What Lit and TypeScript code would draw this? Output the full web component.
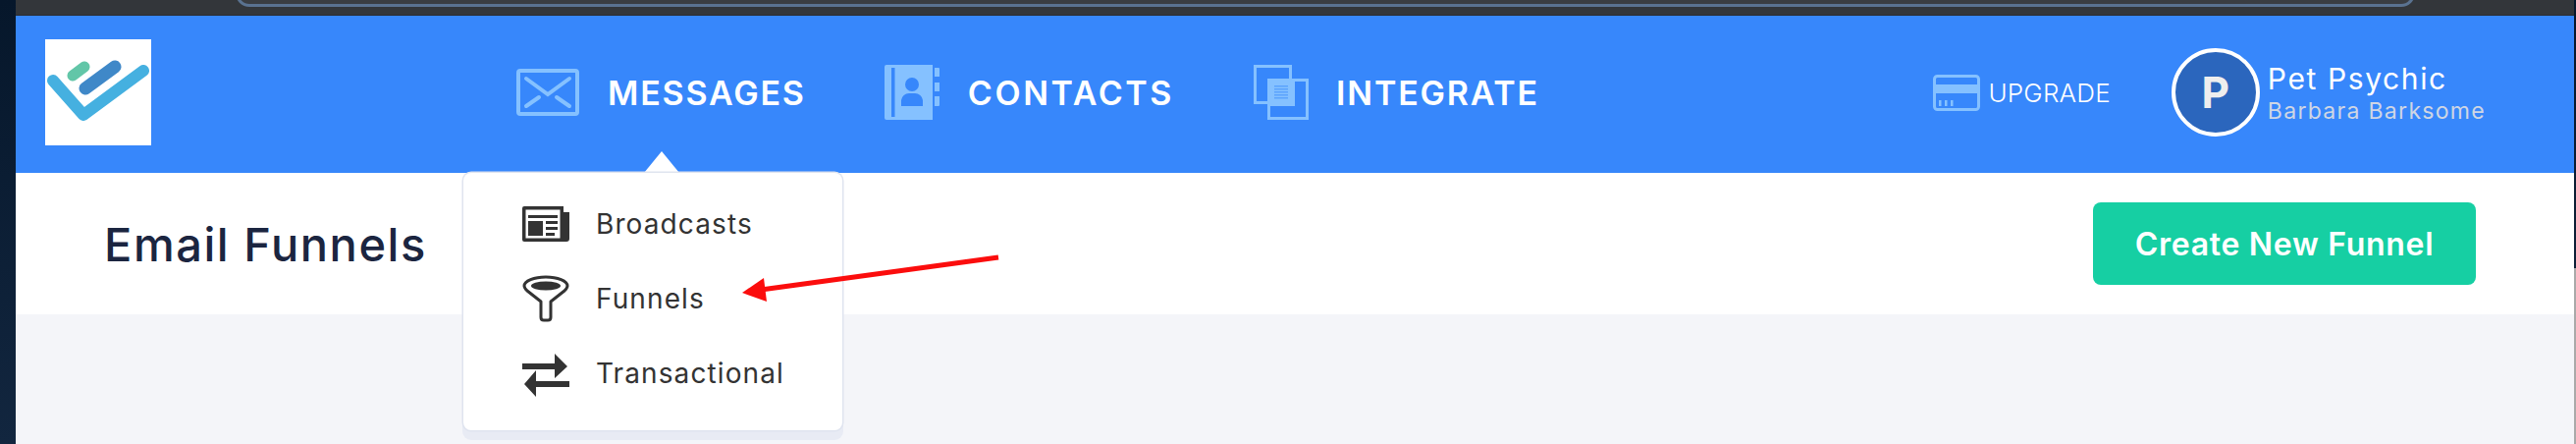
import { LitElement, html, css } from "lit";
import { customElement } from "lit/decorators.js";

const envelope = html`<svg class="ico env" viewBox="0 0 64 48" fill="none" stroke="#85c1ff" stroke-width="4" stroke-linecap="round"><rect x="2" y="2" width="60" height="44" rx="2"/><path d="M10 10 L32 26 L54 10"/><path d="M10 38 L23 29"/><path d="M54 38 L41 29"/></svg>`;
const book = html`<svg class="ico book" viewBox="0 0 56 56"><path fill="#85c1ff" d="M2 0H49V56H2a2 2 0 0 1-2-2V2a2 2 0 0 1 2-2z"/><rect x="7" y="3" width="3.5" height="50" fill="#3787fb"/><circle cx="28" cy="20" r="7" fill="#3787fb"/><path fill="#3787fb" d="M17 42v-6a8 8 0 0 1 8-7h6a8 8 0 0 1 8 7v6z"/><path fill="#85c1ff" d="M51 3h4a1 1 0 0 1 1 1v8h-5zM51 18h5v9h-5zM51 32h5v9a1 1 0 0 1-1 1h-4z"/></svg>`;
const stack = html`<svg class="ico stack" viewBox="0 0 56 56"><g fill="none" stroke="#85c1ff" stroke-width="3"><rect x="1.5" y="1.5" width="36" height="37"/><rect x="15.500" y="15.500" width="39" height="39"/></g><rect x="14" y="14" width="28" height="28" fill="#85c1ff"/><g fill="#5ba3fd"><rect x="21" y="21" width="14" height="1.500"/><rect x="21" y="24" width="14" height="1.500"/><rect x="21" y="27" width="14" height="1.500"/><rect x="21" y="30" width="14" height="1.500"/><rect x="21" y="33" width="14" height="1.500"/></g></svg>`;
const card = html`<svg class="card" viewBox="0 0 48 37"><rect x="1.500" y="1.500" width="45" height="34" rx="3" fill="none" stroke="#85c1ff" stroke-width="3"/><rect x="2" y="10" width="44" height="9" fill="#85c1ff"/><g fill="#85c1ff"><rect x="6" y="26" width="2.500" height="6"/><rect x="12" y="26" width="2.500" height="6"/><rect x="18" y="26" width="2.500" height="6"/></g></svg>`;

const news = html`<svg class="mi" viewBox="0 0 48 36"><path fill="#333" d="M2 0H42V6H48V33a3 3 0 0 1-3 3H2a2 2 0 0 1-2-2V2a2 2 0 0 1 2-2z"/><rect x="3.500" y="3.500" width="35" height="29" fill="#fff"/><g fill="#333"><rect x="6" y="9" width="30" height="3"/><rect x="6" y="15" width="15" height="15"/><rect x="24" y="15" width="12" height="3"/><rect x="24" y="21" width="12" height="3"/><rect x="24" y="27" width="9" height="3"/></g></svg>`;
const funnel = html`<svg class="mi" viewBox="0 0 48 48"><path fill="none" stroke="#333" stroke-width="3" stroke-linejoin="round" d="M24 2C12 2 2 6 2 11c0 2 1 3 3 5l14 11v16c0 2 1 3 3 3h4c2 0 3-1 3-3V27l14-11c2-2 3-3 3-5 0-5-10-9-22-9z"/><ellipse cx="24" cy="11" rx="15" ry="4.500" fill="#333"/></svg>`;
const swap = html`<svg class="mi" viewBox="0 -4 48 48"><path fill="#333" d="M0 10H33V0L46 13 33 25V16H0zM48 28V34H14V44L2 31 14 17V28z"/></svg>`;

@customElement("app-root")
export class AppRoot extends LitElement {
  static styles = css`
    :host { display: block; height: 452px; position: relative; overflow: hidden; background: linear-gradient(180deg,#06172b,#12263f); font-family: Inter, "Liberation Sans", sans-serif; }
    .top { height: 16px; margin: 0 2px 0 16px; background: #33363a; border-bottom: 1px solid #2a2c2f; box-sizing: border-box; position: relative; overflow: hidden; }
    .pill { position: absolute; left: 224px; right: 162px; top: -10px; height: 14px; border: 3px solid #5a7290; border-top: 0; border-radius: 0 0 14px 14px; background: #3a3d42; }
    .edge { position: absolute; right: 0; top: 273px; bottom: 0; width: 2px; background: #a9a9a9; }
    .page { margin: 0 2px 0 16px; height: 436px; background: #f4f5f9; display: flex; flex-direction: column; }
    header { height: 160px; box-sizing: border-box; background: #3787fb; display: flex; align-items: center; padding: 0 0 4px 30px; position: relative; flex: none; }
    .logo { width: 108px; height: 108px; background: #fff; flex: none; display: block; }
    nav { display: flex; align-items: center; margin-left: 372px; }
    .nav-item { display: flex; align-items: center; color: #fff; font-weight: 600; font-size: 34px; letter-spacing: 1.8px; white-space: nowrap; }
    .ico { display: block; flex: none; }
    .env { width: 64px; height: 48px; margin-right: 29px; }
    .book { width: 56px; height: 56px; margin-right: 29px; }
    .stack { width: 56px; height: 56px; margin-right: 28px; }
    .m1 { margin-right: 80px; }
    .m2 { margin-right: 81px; letter-spacing: 2.6px; }
    .right { margin-left: auto; display: flex; align-items: center; padding-right: 90px; }
    .card { width: 48px; height: 37px; display: block; margin-right: 8px; }
    .up { color: #fff; font-size: 26px; font-weight: 300; letter-spacing: .2px; margin-right: 62px; }
    .avatar { width: 90px; height: 90px; box-sizing: border-box; border: 4px solid #fff; border-radius: 50%; background: #2b66bd; color: #eee; font-size: 44px; font-weight: 700; display: flex; align-items: center; justify-content: center; margin-right: 8px; }
    .who { display: flex; flex-direction: column; padding-top: 2px; }
    .who b { color: #fff; font-weight: 400; font-size: 30px; letter-spacing: 1.6px; line-height: 36px; }
    .who span { color: #cfd6e4; font-size: 23px; font-weight: 400; letter-spacing: 1.3px; line-height: 30px; }
    .band { height: 144px; background: #fff; display: flex; align-items: center; justify-content: space-between; padding: 0 100px 0 90px; flex: none; }
    h1 { margin: 0; font-size: 47px; font-weight: 500; letter-spacing: 1.55px; color: #1b2540; }
    .btn { width: 390px; height: 84px; border-radius: 8px; background: #16cfa3; color: #fff; font-weight: 600; font-size: 32px; letter-spacing: .7px; display: flex; align-items: center; justify-content: center; }
    .caret { position: absolute; left: 656px; top: 154px; width: 0; height: 0; border-left: 18px solid transparent; border-right: 18px solid transparent; border-bottom: 22px solid #fff; }
    .menu { position: absolute; left: 472px; top: 176px; width: 386px; height: 262px; box-sizing: border-box; background: #fff; border-radius: 8px; box-shadow: 0 0 0 1.500px #dfe4ef, 0 9px 0 1px #e8ebf4; padding: 28px 0 0 60px; display: flex; flex-direction: column; gap: 28px; }
    .row { display: flex; align-items: center; height: 48px; gap: 27px; color: #333; font-size: 28px; letter-spacing: 1.1px; }
    .mi { width: 48px; height: 48px; display: block; flex: none; }
    .arrow { position: absolute; left: 0; top: 0; pointer-events: none; }
  `;

  render() {
    return html`
      <div class="top"><div class="pill"></div></div>
      <div class="edge"></div>
      <div class="page">
        <header>
          <svg class="logo" viewBox="46 40 108 108" fill="none" stroke-linecap="round"><g style="filter:blur(.6px)"><path d="M54 82 L85 117 L146 72" stroke="#45b0e0" stroke-width="12" stroke-linejoin="round"/><path d="M87 90 L117 68" stroke="#3f88c8" stroke-width="13"/><path d="M74 77 L86 68" stroke="#62c6a8" stroke-width="11"/></g></svg>
          <nav>
            <div class="nav-item m1">${envelope}MESSAGES</div>
            <div class="nav-item m2">${book}CONTACTS</div>
            <div class="nav-item">${stack}INTEGRATE</div>
          </nav>
          <div class="right">
            ${card}<div class="up">UPGRADE</div>
            <div class="avatar">P</div>
            <div class="who"><b>Pet Psychic</b><span>Barbara Barksome</span></div>
          </div>
        </header>
        <div class="band"><h1>Email Funnels</h1><div class="btn">Create New Funnel</div></div>
      </div>
      <div class="caret"></div>
      <div class="menu">
        <div class="row">${news}Broadcasts</div>
        <div class="row">${funnel}Funnels</div>
        <div class="row">${swap}Transactional</div>
      </div>
      <svg class="arrow" width="2624" height="452"><path d="M1017 262 L775 295" stroke="#fb0d0d" stroke-width="5" fill="none"/><path d="M756 298 L778 283 L781 307 Z" fill="#fb0d0d"/></svg>
    `;
  }
}
